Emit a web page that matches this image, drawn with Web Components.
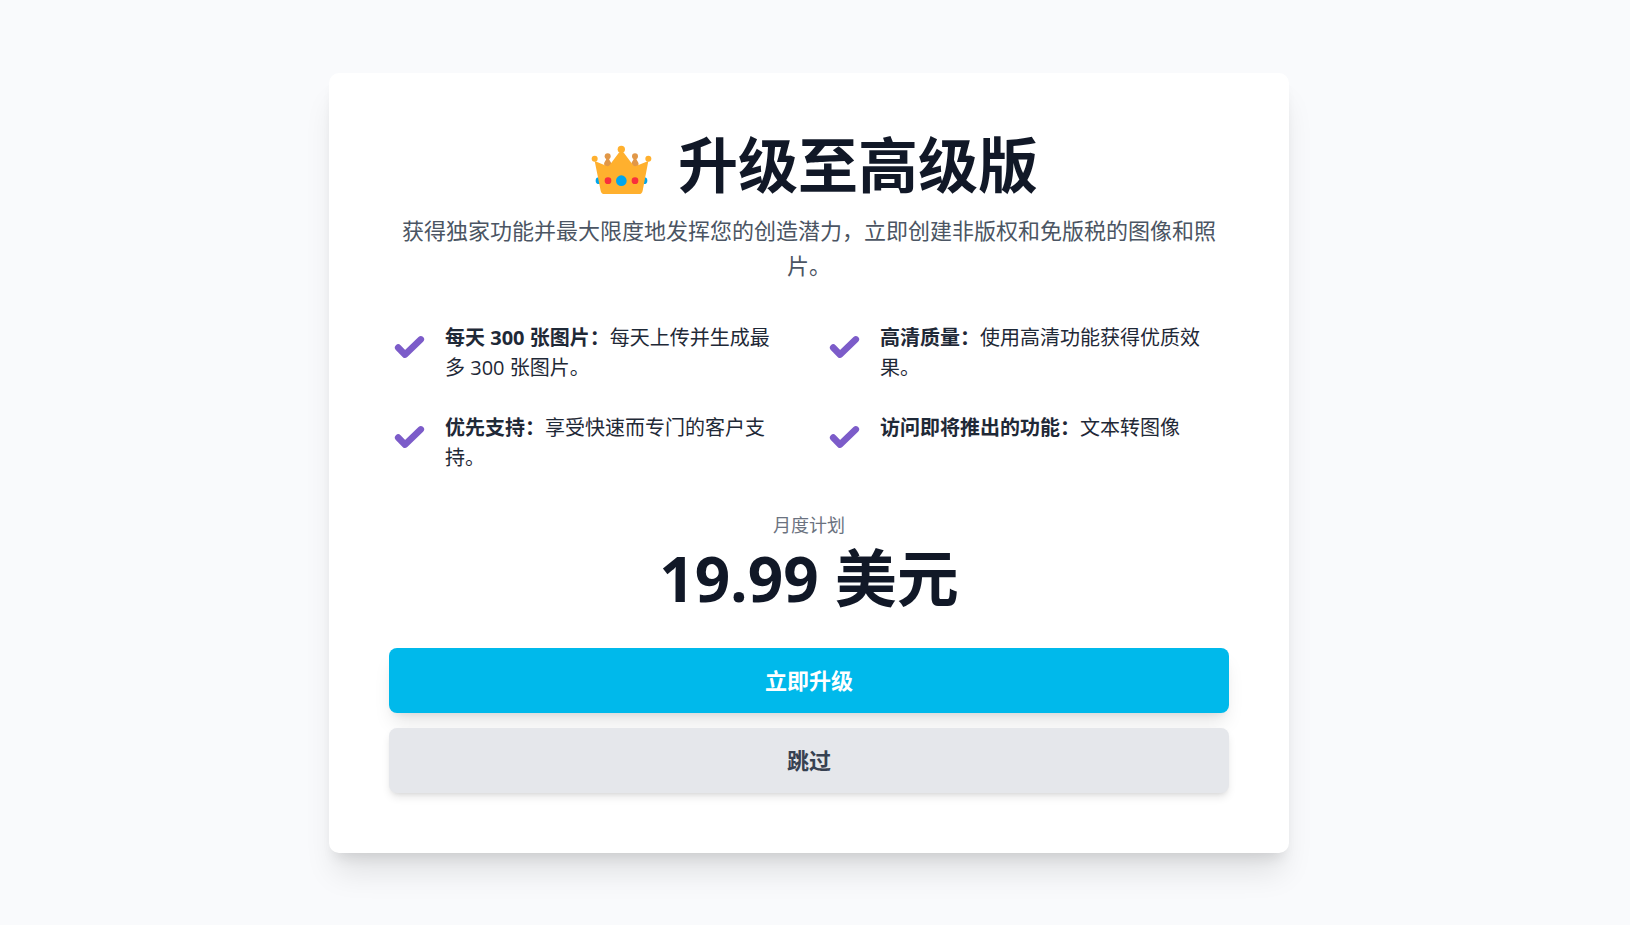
<!DOCTYPE html>
<html lang="zh-CN">
<head>
<meta charset="utf-8">
<meta name="viewport" content="width=device-width, initial-scale=1">
<title>升级至高级版</title>
<style>
  * {
    box-sizing: border-box;
  }

  body {
    margin: 0;
    background: #f9fafc;
    color: #1f2937;
    font-family: "Open Sans", "Noto Sans CJK SC", sans-serif;
    font-size: 20px;
    line-height: 30px;
  }
</style>
</head>
<body>
<upgrade-page>
  <upgrade-card>
    <upgrade-header slot="header">
      升级至高级版
      <span slot="description">获得独家功能并最大限度地发挥您的创造潜力，立即创建非版权和免版税的图像和照片。</span>
    </upgrade-header>

    <plan-feature slot="features" label="每天 300 张图片：">每天上传并生成最多 300 张图片。</plan-feature>
    <plan-feature slot="features" label="高清质量：">使用高清功能获得优质效果。</plan-feature>
    <plan-feature slot="features" label="优先支持：">享受快速而专门的客户支持。</plan-feature>
    <plan-feature slot="features" label="访问即将推出的功能：">文本转图像</plan-feature>

    <plan-price slot="price" plan="月度计划">19.99 美元</plan-price>

    <action-button slot="actions" variant="primary">立即升级</action-button>
    <action-button slot="actions" variant="secondary">跳过</action-button>
  </upgrade-card>
</upgrade-page>

<script>
const createTemplate = (html) => {
  const template = document.createElement("template")
  template.innerHTML = html
  return template
}

const pageTemplate = createTemplate(`
  <style>
    :host {
      display: block;
    }

    main {
      box-sizing: border-box;
      display: flex;
      align-items: center;
      justify-content: center;
      min-height: 100vh;
      padding: 20px 12px 20px 0;
    }
  </style>
  <main><slot></slot></main>
`)

const cardTemplate = createTemplate(`
  <style>
    :host {
      box-sizing: border-box;
      display: block;
      width: 100%;
      max-width: 960px;
      padding: 60px;
      border-radius: 10px;
      background: #fff;
      box-shadow: 0 25px 31px -6px rgba(0, 0, 0, 0.1),
        0 10px 13px -6px rgba(0, 0, 0, 0.1);
    }

    #features {
      display: grid;
      grid-template-columns: 1fr 1fr;
      gap: 30px;
      margin: 40px 0;
    }

    #actions {
      display: flex;
      flex-direction: column;
      gap: 15px;
      margin-top: 40px;
    }

    @media (max-width: 800px) {
      :host {
        padding: 30px;
      }

      #features {
        grid-template-columns: 1fr;
      }
    }
  </style>
  <slot name="header"></slot>
  <div id="features"><slot name="features"></slot></div>
  <slot name="price"></slot>
  <div id="actions"><slot name="actions"></slot></div>
`)

const headerTemplate = createTemplate(`
  <style>
    :host {
      display: block;
      text-align: center;
    }

    h1 {
      display: flex;
      align-items: flex-start;
      justify-content: center;
      gap: 16px;
      margin: 0 0 16px;
      color: #111827;
      font-size: 60px;
      font-weight: 700;
      line-height: 64px;
    }

    svg {
      flex: none;
      width: 82px;
      height: 62px;
    }

    p {
      margin: 0;
      color: #4b5563;
      font-size: 22px;
      line-height: 35px;
    }
  </style>
  <h1>
    <svg viewBox="0 9 246 186" aria-hidden="true">
      <g fill="#00a6ed">
        <circle cx="57" cy="152" r="10"/>
        <circle cx="192" cy="152" r="10"/>
      </g>
      <g fill="#e19747">
        <circle cx="83" cy="79" r="9"/>
        <circle cx="165" cy="79" r="9"/>
        <path d="M79 84h8c0 8 6 10 7 18l-6 14H78l-6-14c1-8 7-10 7-18z"/>
        <path d="M161 84h8c0 8 6 10 7 18l-6 14h-10l-6-14c1-8 7-10 7-18z"/>
      </g>
      <g fill="#ffb02e">
        <circle cx="44" cy="86" r="9"/>
        <circle cx="205" cy="86" r="9"/>
        <circle cx="124" cy="58" r="11"/>
        <path d="M44 93l36 15q5 2 9-3l27-36q8-8 16 0l27 36q4 5 9 3l37-15-17 89q-2 10-11 10H73q-9 0-11-10z"/>
      </g>
      <g fill="#f92f3c">
        <circle cx="84" cy="152" r="10"/>
        <circle cx="165" cy="152" r="10"/>
      </g>
      <circle cx="124" cy="152" r="16" fill="#00a6ed"/>
    </svg>
    <span><slot></slot></span>
  </h1>
  <p><slot name="description"></slot></p>
`)

const featureTemplate = createTemplate(`
  <style>
    :host {
      display: flex;
      align-items: flex-start;
      gap: 16px;
    }

    svg {
      flex: none;
      width: 40px;
      height: 48px;
    }

    p {
      margin: 0;
      padding-right: 10px;
    }

    strong {
      font-weight: 700;
    }
  </style>
  <svg viewBox="0 0 40 48" fill="none" stroke="#7c5cc9" stroke-width="6.6" stroke-linecap="round" stroke-linejoin="round" aria-hidden="true">
    <path d="M9.2 24.6 16 31.6 31.8 16.4"/>
  </svg>
  <p><strong id="feature-label"></strong><slot></slot></p>
`)

const priceTemplate = createTemplate(`
  <style>
    :host {
      display: block;
      text-align: center;
    }

    p {
      margin: 0;
    }

    #price-plan {
      margin-bottom: 10px;
      color: #6b7280;
      font-size: 18px;
      line-height: 25px;
    }

    #price-amount {
      color: #111827;
      font-size: 62px;
      font-weight: 700;
      line-height: 60px;
    }
  </style>
  <p id="price-plan"></p>
  <p id="price-amount"><slot></slot></p>
`)

const buttonTemplate = createTemplate(`
  <style>
    :host {
      display: block;
    }

    button {
      width: 100%;
      padding: 15px 30px;
      border: 0;
      border-radius: 8px;
      background: #00b9eb;
      box-shadow: 0 13px 19px -4px rgba(0, 0, 0, 0.1),
        0 5px 8px -5px rgba(0, 0, 0, 0.1);
      color: #fff;
      font: inherit;
      font-size: 22px;
      font-weight: 700;
      line-height: 35px;
      cursor: pointer;
    }

    :host([variant="secondary"]) button {
      background: #e5e7eb;
      box-shadow: 0 5px 8px -1px rgba(0, 0, 0, 0.1),
        0 3px 5px -3px rgba(0, 0, 0, 0.1);
      color: #374151;
    }
  </style>
  <button type="button"><slot></slot></button>
`)

class UpgradePage extends HTMLElement {
  constructor() {
    super()
    this.attachShadow({ mode: "open" }).append(pageTemplate.content.cloneNode(true))
  }
}

class UpgradeCard extends HTMLElement {
  constructor() {
    super()
    this.attachShadow({ mode: "open" }).append(cardTemplate.content.cloneNode(true))
  }
}

class UpgradeHeader extends HTMLElement {
  constructor() {
    super()
    this.attachShadow({ mode: "open" }).append(headerTemplate.content.cloneNode(true))
  }
}

class PlanFeature extends HTMLElement {
  constructor() {
    super()
    const shadow = this.attachShadow({ mode: "open" })
    shadow.append(featureTemplate.content.cloneNode(true))
    this.featureLabel = shadow.getElementById("feature-label")
  }

  static get observedAttributes() {
    return ["label"]
  }

  attributeChangedCallback(name, oldValue, newValue) {
    this.featureLabel.textContent = newValue
  }
}

class PlanPrice extends HTMLElement {
  constructor() {
    super()
    const shadow = this.attachShadow({ mode: "open" })
    shadow.append(priceTemplate.content.cloneNode(true))
    this.pricePlan = shadow.getElementById("price-plan")
  }

  static get observedAttributes() {
    return ["plan"]
  }

  attributeChangedCallback(name, oldValue, newValue) {
    this.pricePlan.textContent = newValue
  }
}

class ActionButton extends HTMLElement {
  constructor() {
    super()
    const shadow = this.attachShadow({ mode: "open" })
    shadow.append(buttonTemplate.content.cloneNode(true))

    // Announce which action was picked to whoever hosts the card
    shadow.querySelector("button").addEventListener("click", () => {
      this.dispatchEvent(
        new CustomEvent("plan-action", {
          detail: { action: this.getAttribute("variant") },
          bubbles: true,
          composed: true
        })
      )
    })
  }
}

customElements.define("upgrade-page", UpgradePage)
customElements.define("upgrade-card", UpgradeCard)
customElements.define("upgrade-header", UpgradeHeader)
customElements.define("plan-feature", PlanFeature)
customElements.define("plan-price", PlanPrice)
customElements.define("action-button", ActionButton)
</script>
</body>
</html>
